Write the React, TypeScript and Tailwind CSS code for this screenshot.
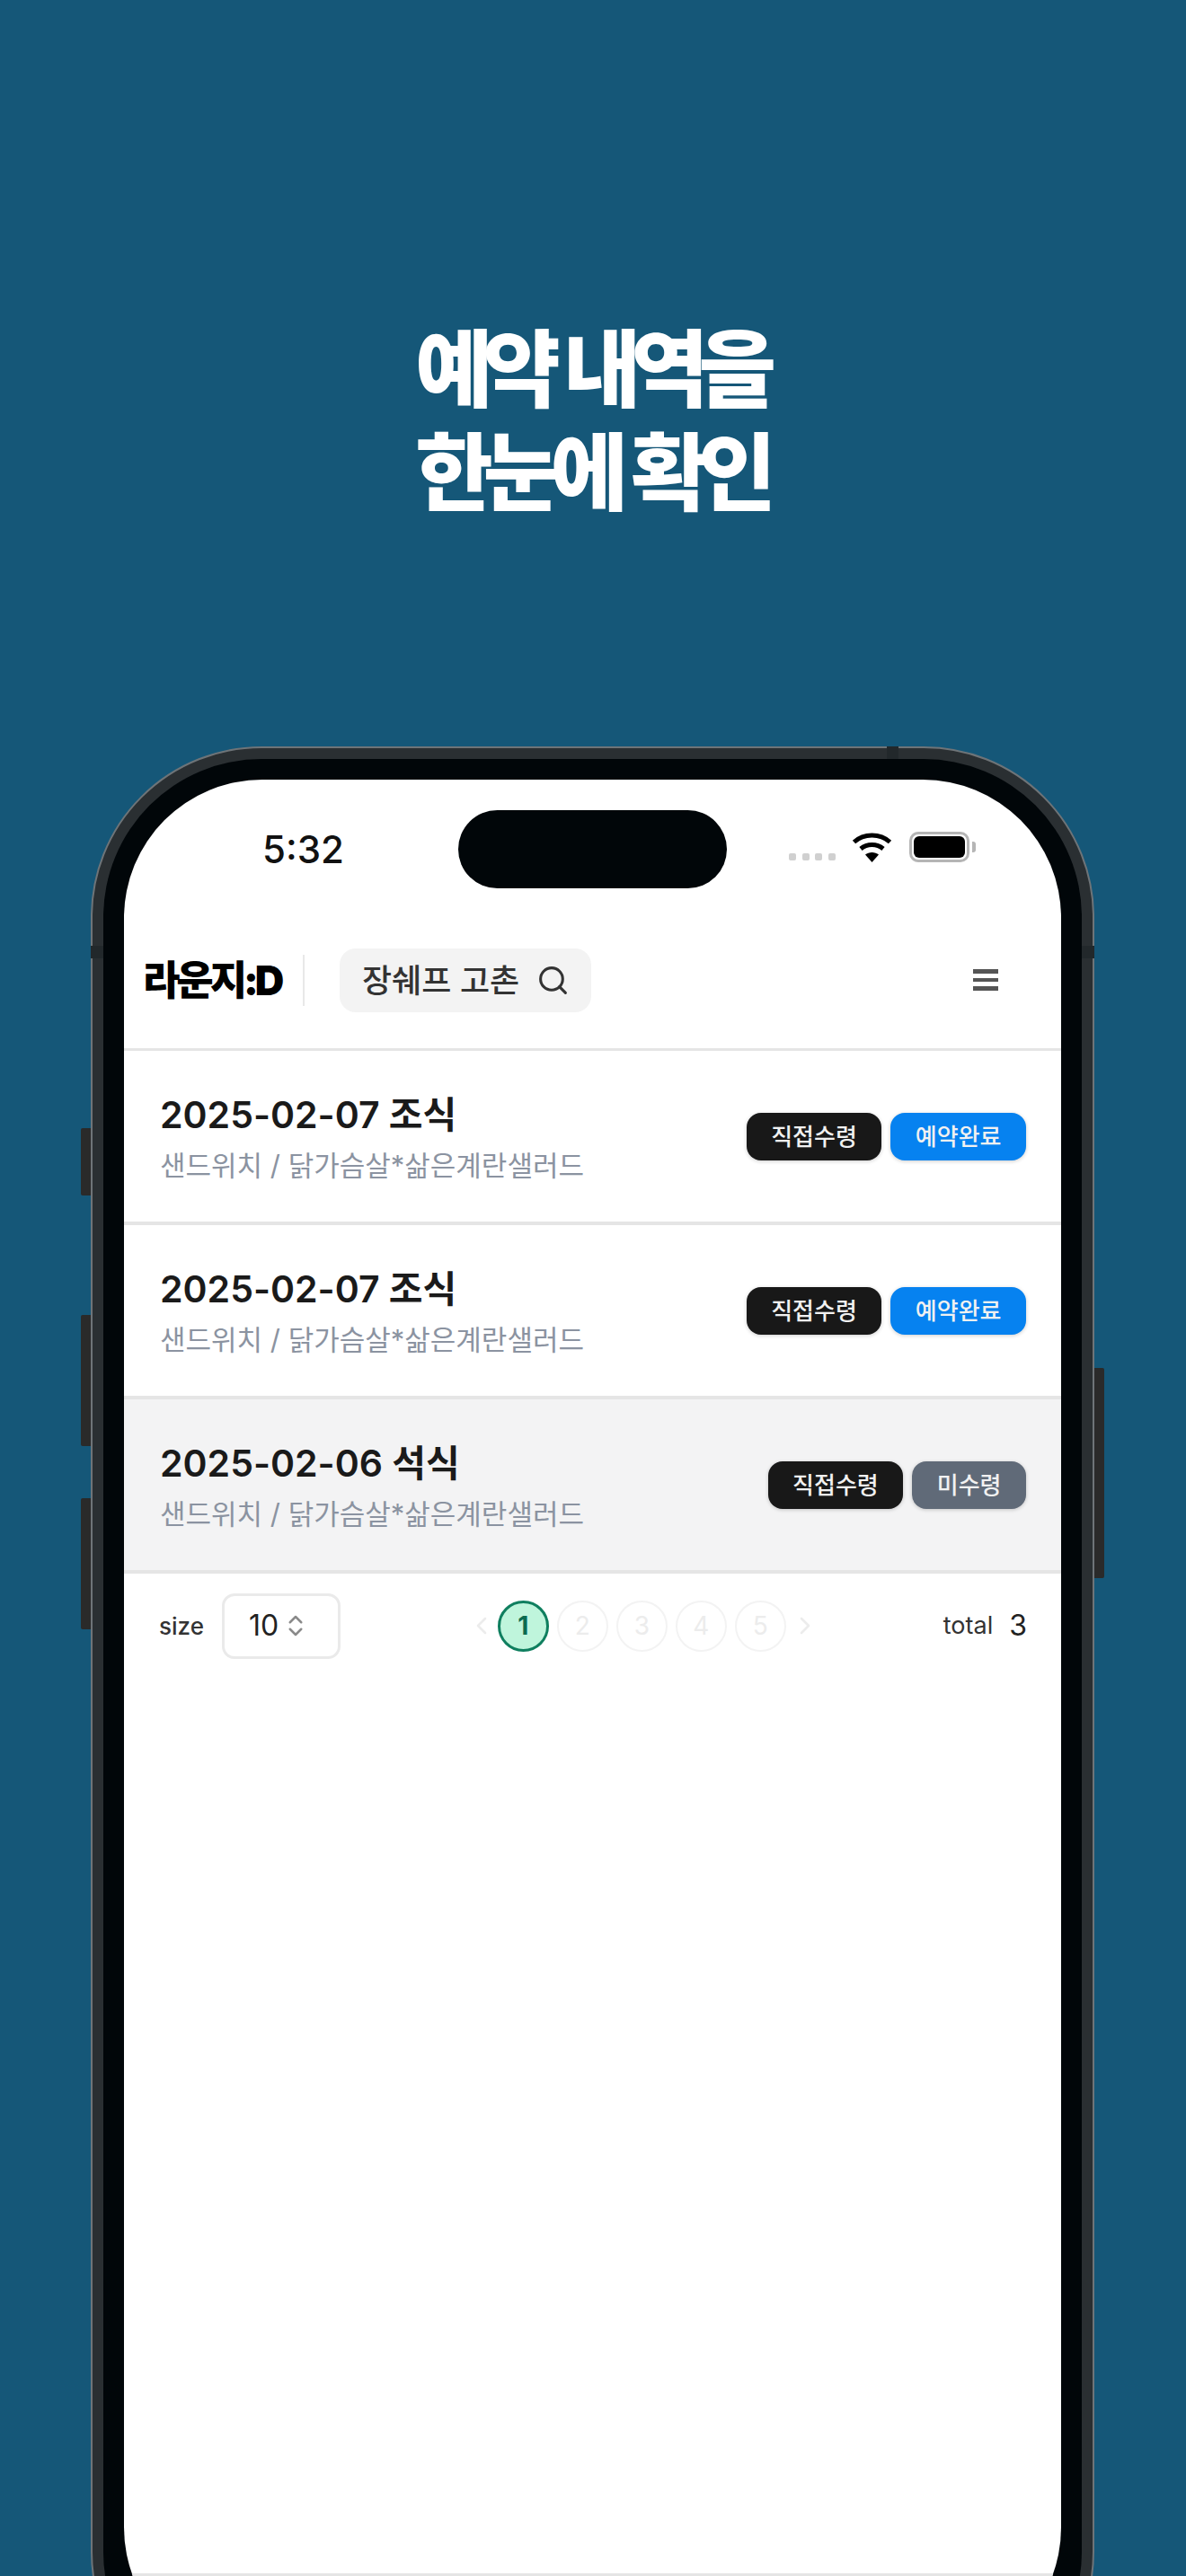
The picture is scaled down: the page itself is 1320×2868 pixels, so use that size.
import { ChevronLeft, ChevronRight, ChevronsUpDown, Search } from 'lucide-react';

const rows = [
  { title: '2025-02-07 조식', status: '예약완료', statusClass: 'bg-[#0682f0]', rowClass: 'bg-white' },
  { title: '2025-02-07 조식', status: '예약완료', statusClass: 'bg-[#0682f0]', rowClass: 'bg-white' },
  { title: '2025-02-06 석식', status: '미수령', statusClass: 'bg-[#606a78]', rowClass: 'bg-[#f3f3f4]' },
];

function Badge({ label, className }: { label: string; className: string }) {
  return (
    <span className={`flex h-[53px] items-center justify-center rounded-[16px] px-[27.5px] text-[26px] font-medium text-[#f1f1f1] shadow-[0_1px_4px_rgba(0,0,0,0.2)] ${className}`}>
      {label}
    </span>
  );
}

function Wifi() {
  return (
    <svg width="45" height="34" viewBox="0 0 45 34" fill="none" stroke="#000" strokeWidth="5">
      <path d="M2.5 11.5C13.5 1.5 31.5 1.5 42.5 11.5" />
      <path d="M10 19C17 13 28 13 35 19" />
      <path d="M22.5 34L15 25.5C19 22 26 22 30 25.5Z" fill="#000" stroke="none" />
    </svg>
  );
}

function StatusBar() {
  return (
    <div className="flex h-[121px] items-start pt-[34px]">
      <div className="flex h-[87px] w-[372px] items-center pl-[154px] text-[42px] leading-none font-medium text-[#111]">5:32</div>
      <div className="h-[87px] w-[299px] rounded-[44px] bg-[#010609]" />
      <div className="flex h-[34px] flex-1 items-center pl-[69px] mt-[24px]">
        <div className="mt-[22px] flex w-[52px] justify-between">
          <span className="size-[8px] rounded-[2px] bg-[#d0d0d0]" />
          <span className="size-[8px] rounded-[2px] bg-[#d0d0d0]" />
          <span className="size-[8px] rounded-[2px] bg-[#d0d0d0]" />
          <span className="size-[8px] rounded-[2px] bg-[#d0d0d0]" />
        </div>
        <div className="ml-[18px]"><Wifi /></div>
        <div className="ml-[19px] h-[34px] w-[67px] rounded-[10px] border-[3px] border-[#b5b5b5] p-[2px]">
          <div className="h-full w-full rounded-[6px] bg-black" />
        </div>
        <div className="ml-[3px] h-[12px] w-[4px] rounded-r-[3px] bg-[#b5b5b5]" />
      </div>
    </div>
  );
}

function Header() {
  return (
    <div className="flex h-[181px] items-start border-b-[3px] border-[#e5e5e5] pt-[67px] pl-[21px] pr-[70px]">
      <div className="mt-[7px] w-[155px] text-[45px] leading-[58px] font-black tracking-[-0.09em] whitespace-nowrap text-black">라운지:D</div>
      <div className="mx-[23px] mt-[7px] h-[57px] w-[2px] bg-[#e8e8e8]" />
      <div className="ml-[16px] flex h-[71px] w-[280px] items-center rounded-[18px] bg-[#f3f3f3] pl-[25px] text-[36px] font-medium text-[#333]">
        <span className="whitespace-nowrap">장쉐프 고촌</span>
        <Search size={37} strokeWidth={2} className="ml-[19px] text-[#333]" />
      </div>
      <div className="ml-auto mt-[23px] flex h-[24px] w-[28px] flex-col justify-between">
        <span className="h-[5px] bg-[#555]" />
        <span className="h-[4px] bg-[#555]" />
        <span className="h-[5px] bg-[#555]" />
      </div>
    </div>
  );
}

function Pager() {
  return (
    <div className="flex h-[116px] items-center justify-between pl-[39px] pr-[38px]">
      <div className="flex items-center gap-[20px]">
        <span className="text-[26px] font-medium text-[#333]">size</span>
        <div className="flex h-[73px] w-[132px] items-center rounded-[14px] border-[3px] border-[#eaeaea] pl-[27px] text-[32px] text-[#222]">
          10
          <ChevronsUpDown size={30} strokeWidth={2} className="ml-[4px] text-[#8a8a8a]" />
        </div>
      </div>
      <div className="ml-[3px] flex items-center">
        <ChevronLeft size={32} strokeWidth={2} className="mr-[2px] text-[#ececec]" />
        <div className="flex gap-[9px]">
          <span className="flex size-[57px] items-center justify-center rounded-full border-[3px] border-[#0f7f5f] bg-[#bff5dc] text-[28px] font-bold text-[#0b6b50]">1</span>
          {[2, 3, 4, 5].map((n) => (
            <span key={n} className="flex size-[57px] items-center justify-center rounded-full border-[2px] border-[#f3f3f3] text-[28px] text-[#ececec]">{n}</span>
          ))}
        </div>
        <ChevronRight size={32} strokeWidth={2} className="ml-[5px] text-[#ececec]" />
      </div>
      <div className="flex items-center gap-[18px]">
        <span className="text-[27px] text-[#333]">total</span>
        <span className="text-[32px] text-[#222]">3</span>
      </div>
    </div>
  );
}

export default function App() {
  return (
    <div className="h-[2868px] overflow-hidden bg-[#155778] font-[Inter,'Noto_Sans_CJK_KR',sans-serif]">
      <h1 className="pt-[355px] pr-[5px] text-center text-[94px] leading-[115px] font-black tracking-[-0.12em] [word-spacing:7px] text-white">
        <span className="block">예약 내역을</span>
        <span className="block">한눈에 확인</span>
      </h1>

      <div className="relative mt-[246px] ml-[101px] h-[2200px] w-[1117px] rounded-[190px] border-[2px] border-[#6e7478] bg-[#2a2f32] p-[12px]">
        {/* side buttons */}
        <div className="absolute top-[423px] -left-[13px] h-[75px] w-[11px] rounded-l-[2px] bg-[#2a2a2a]" />
        <div className="absolute top-[631px] -left-[13px] h-[146px] w-[11px] rounded-l-[2px] bg-[#2a2a2a]" />
        <div className="absolute top-[835px] -left-[13px] h-[146px] w-[11px] rounded-l-[2px] bg-[#2a2a2a]" />
        <div className="absolute top-[690px] -right-[13px] h-[234px] w-[11px] rounded-r-[2px] bg-[#2a2a2a]" />
        {/* antenna bands */}
        <div className="absolute top-[220px] -left-[2px] h-[14px] w-[14px] bg-[#22282b]" />
        <div className="absolute top-[220px] -right-[2px] h-[14px] w-[14px] bg-[#22282b]" />
        <div className="absolute -top-[2px] right-[216px] h-[14px] w-[13px] bg-[#22282b]" />

        <div className="h-full rounded-[176px] bg-[#010609] px-[23px] pt-[23px]">
          <div className="h-[2100px] overflow-hidden rounded-[154px] bg-white">
            <StatusBar />
            <Header />
            {rows.map((row, i) => (
              <div key={i} className={`flex h-[194px] items-center justify-between border-b-[4px] border-[#e5e5e5] pl-[40px] pr-[39px] ${row.rowClass}`}>
                <div className="self-start pt-[43px]">
                  <div className="text-[41px] leading-[56px] font-semibold text-[#1a1a1a]">{row.title}</div>
                  <div className="mt-[7px] text-[31px] leading-[44px] text-[#8b93a1]">샌드위치 / 닭가슴살*삶은계란샐러드</div>
                </div>
                <div className="flex gap-[10px]">
                  <Badge label="직접수령" className="bg-[#181818]" />
                  <Badge label={row.status} className={row.statusClass} />
                </div>
              </div>
            ))}
            <Pager />
            <div className="mt-[997px] h-[100px] border-t-[3px] border-[#e5e5e5]" />
          </div>
        </div>
      </div>
    </div>
  );
}
